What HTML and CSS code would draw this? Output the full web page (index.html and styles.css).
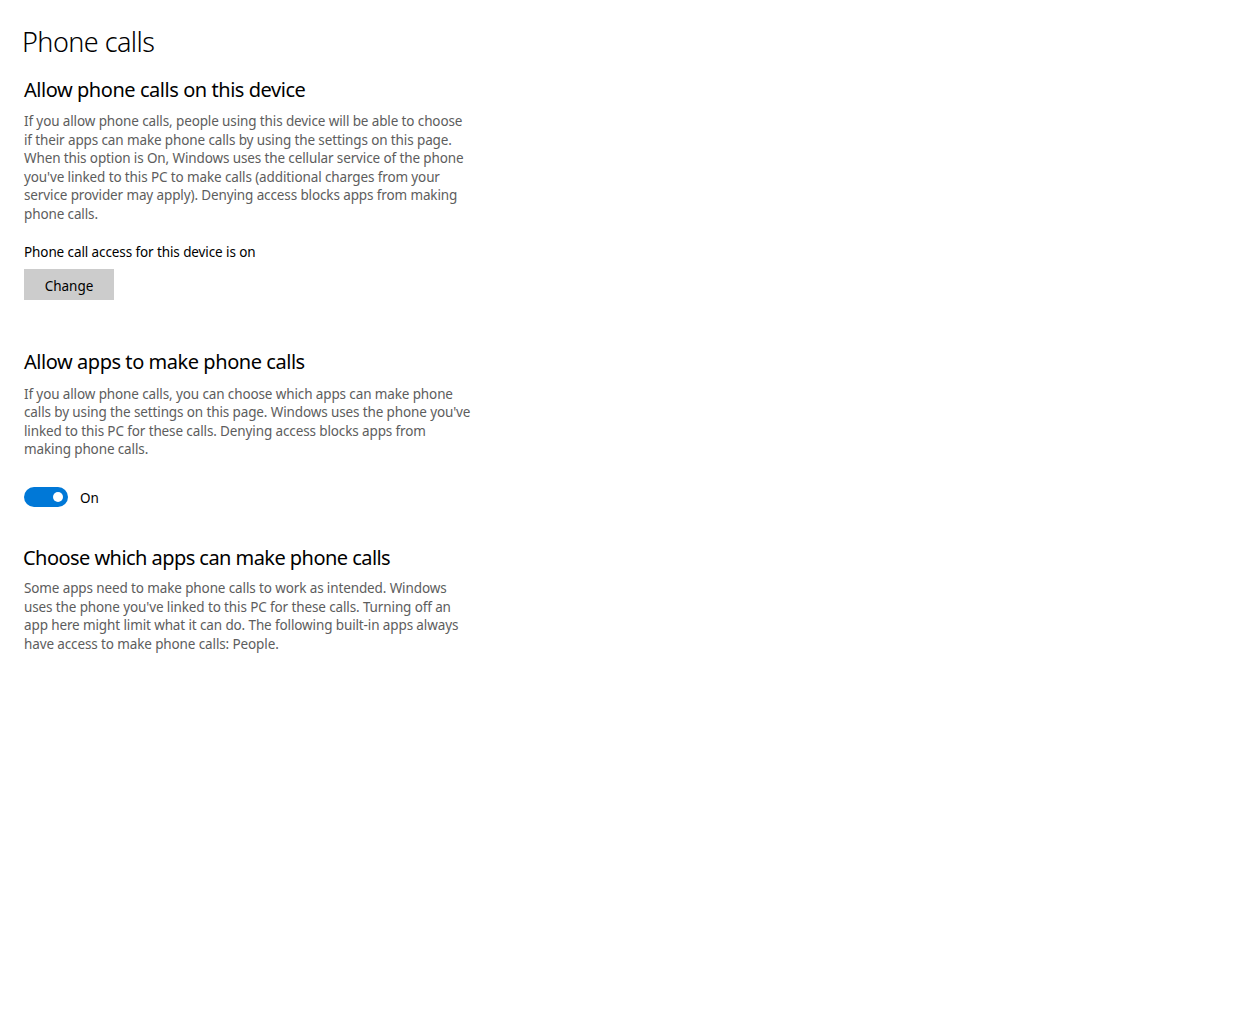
FILE: index.html
```html
<!DOCTYPE html>
<html lang="en">
<head>
<meta charset="utf-8">
<title>Phone calls</title>
<link rel="stylesheet" href="styles.css">
</head>
<body>
<main class="page">
  <h1 class="title">Phone calls</h1>

  <section class="section first">
    <h2 class="heading">Allow phone calls on this device</h2>
    <p class="desc">If you allow phone calls, people using this device will be able to choose<br>if their apps can make phone calls by using the settings on this page.<br>When this option is On, Windows uses the cellular service of the phone<br>you've linked to this PC to make calls (additional charges from your<br>service provider may apply). Denying access blocks apps from making<br>phone calls.</p>
    <p class="status">Phone call access for this device is on</p>
    <button class="btn" type="button">Change</button>
  </section>

  <section class="section second">
    <h2 class="heading">Allow apps to make phone calls</h2>
    <p class="desc">If you allow phone calls, you can choose which apps can make phone<br>calls by using the settings on this page. Windows uses the phone you've<br>linked to this PC for these calls. Denying access blocks apps from<br>making phone calls.</p>
    <div class="toggle-row">
      <span class="toggle"><span class="knob"></span></span>
      <span class="toggle-label">On</span>
    </div>
  </section>

  <section class="section third">
    <h2 class="heading wide">Choose which apps can make phone calls</h2>
    <p class="desc">Some apps need to make phone calls to work as intended. Windows<br>uses the phone you've linked to this PC for these calls. Turning off an<br>app here might limit what it can do. The following built-in apps always<br>have access to make phone calls: People.</p>
  </section>
</main>
</body>
</html>
```

FILE: styles.css
```css
html, body {
  margin: 0;
  padding: 0;
  background: #ffffff;
}

body {
  font-family: "Noto Sans", "Open Sans", "Liberation Sans", sans-serif;
  color: #000000;
}

.page {
  padding: 22px 0 0 24px;
  display: flex;
  flex-direction: column;
}

.title {
  margin: 0 0 0 -2px;
  font-size: 27px;
  font-weight: 300;
  line-height: 40px;
  letter-spacing: -0.55px;
}

.section {
  display: flex;
  flex-direction: column;
  align-items: flex-start;
}

.first { margin-top: 14px; }
.second { margin-top: 48px; }
.third { margin-top: 35px; }

.heading {
  margin: 0;
  font-size: 20px;
  font-weight: 400;
  line-height: 28px;
  letter-spacing: -0.45px;
}

.wide { margin-left: -1px; letter-spacing: -0.55px; }

.desc {
  margin: 8px 0 0;
  font-size: 13.5px;
  line-height: 18.6px;
  color: #5d5d5d;
  letter-spacing: -0.12px;
  white-space: nowrap;
}

.second .desc { margin-top: 9px; }
.third .desc { margin-top: 7px; }

.status {
  margin: 19px 0 0;
  font-size: 13.5px;
  line-height: 19px;
  color: #000000;
  letter-spacing: -0.1px;
}

.btn {
  margin-top: 7px;
  width: 90px;
  height: 31px;
  border: none;
  border-radius: 0;
  background: #cccccc;
  font-family: inherit;
  font-size: 13.5px;
  color: #000000;
  padding: 3px 0 0;
}

.toggle-row {
  margin-top: 26px;
  display: flex;
  align-items: center;
  gap: 12px;
}

.toggle {
  width: 44px;
  height: 20px;
  border-radius: 10px;
  background: #0078d7;
  display: flex;
  align-items: center;
  justify-content: flex-end;
  box-sizing: border-box;
  padding-right: 5px;
}

.knob {
  width: 10px;
  height: 10px;
  border-radius: 50%;
  background: #ffffff;
}

.toggle-label {
  font-size: 13.5px;
  line-height: 22px;
  padding-top: 2px;
}
```
